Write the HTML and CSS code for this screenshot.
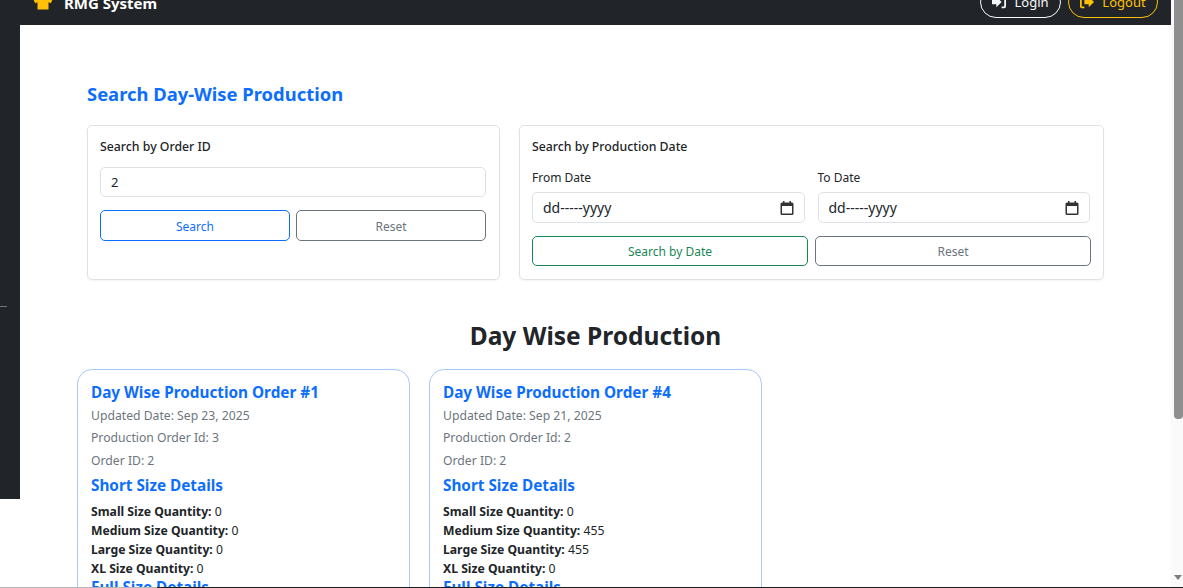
FILE: index.html
```html
<!DOCTYPE html>
<html lang="en">
<head>
  <meta charset="UTF-8" />
  <meta name="viewport" content="width=device-width, initial-scale=1.0" />
  <title>RMG System</title>
  <link rel="stylesheet" href="styles.css">
</head>
<body>
  <div class="window">
    <div class="page">
      <nav class="navbar">
        <div class="brand">
          <svg class="brand-icon" width="22" height="24" viewBox="0 0 24 24"><path fill="#ffc107" d="M7 1l3 1.500h4L17 1l6 4-2.500 5-2.500-1v8H6V9l-2.500 1L1 5z"/></svg>
          <span>RMG System</span>
        </div>
        <div class="nav-actions">
          <a class="nav-btn nav-login">
            <svg width="14" height="14" viewBox="0 0 16 16"><path fill="currentColor" d="M0 5.500h5V2l6 6-6 6v-3.500H0zM11 1h3a2 2 0 0 1 2 2v10a2 2 0 0 1-2 2h-3v-2h3V3h-3z"/></svg>
            Login
          </a>
          <a class="nav-btn nav-logout">
            <svg width="14" height="14" viewBox="0 0 16 16"><path fill="currentColor" d="M5 1H2a2 2 0 0 0-2 2v10a2 2 0 0 0 2 2h3v-2H2V3h3zM5 5.500h5V2l6 6-6 6v-3.500H5z"/></svg>
            Logout
          </a>
        </div>
      </nav>

      <div class="layout">
        <aside class="sidebar"><span class="sidebar-mark"></span></aside>
        <main class="content">
          <!-- Search forms -->
          <section class="search-section">
            <h2 class="search-title">Search Day-Wise Production</h2>
            <div class="search-row">
              <form class="search-card search-card-order">
                <label class="card-label">Search by Order ID</label>
                <input class="field" type="text" value="2" />
                <div class="btn-row">
                  <button type="button" class="btn btn-blue">Search</button>
                  <button type="button" class="btn btn-gray">Reset</button>
                </div>
              </form>
              <form class="search-card search-card-date">
                <label class="card-label">Search by Production Date</label>
                <div class="date-row">
                  <div class="date-col">
                    <label class="date-label">From Date</label>
                    <div class="field date-field">
                      <span>dd-----yyyy</span>
                      <svg width="14" height="14" viewBox="0 0 14 14"><path fill="#333" d="M3 0h1.500v1.500h5V0H11v1.500h1A1.500 1.500 0 0 1 13.500 3v9.500A1.500 1.500 0 0 1 12 14H2A1.500 1.500 0 0 1 .5 12.500V3A1.500 1.500 0 0 1 2 1.500h1zM2 5v7.500h10V5z"/></svg>
                    </div>
                  </div>
                  <div class="date-col">
                    <label class="date-label">To Date</label>
                    <div class="field date-field">
                      <span>dd-----yyyy</span>
                      <svg width="14" height="14" viewBox="0 0 14 14"><path fill="#333" d="M3 0h1.500v1.500h5V0H11v1.500h1A1.500 1.500 0 0 1 13.500 3v9.500A1.500 1.500 0 0 1 12 14H2A1.500 1.500 0 0 1 .5 12.500V3A1.500 1.500 0 0 1 2 1.500h1zM2 5v7.500h10V5z"/></svg>
                    </div>
                  </div>
                </div>
                <div class="btn-row btn-row-date">
                  <button type="button" class="btn btn-green">Search by Date</button>
                  <button type="button" class="btn btn-gray">Reset</button>
                </div>
              </form>
            </div>
          </section>

          <h1 class="list-title">Day Wise Production</h1>

          <div class="order-grid">
            <article class="order-card">
              <h5 class="order-title">Day Wise Production Order #1</h5>
              <p class="meta">Updated Date: Sep 23, 2025</p>
              <p class="meta">Production Order Id: 3</p>
              <p class="meta">Order ID: 2</p>
              <h6 class="size-title">Short Size Details</h6>
              <ul class="qty-list">
                <li><b>Small Size Quantity:</b> 0</li>
                <li><b>Medium Size Quantity:</b> 0</li>
                <li><b>Large Size Quantity:</b> 0</li>
                <li><b>XL Size Quantity:</b> 0</li>
              </ul>
              <h6 class="size-title size-title-full">Full Size Details</h6>
            </article>
            <article class="order-card">
              <h5 class="order-title">Day Wise Production Order #4</h5>
              <p class="meta">Updated Date: Sep 21, 2025</p>
              <p class="meta">Production Order Id: 2</p>
              <p class="meta">Order ID: 2</p>
              <h6 class="size-title">Short Size Details</h6>
              <ul class="qty-list">
                <li><b>Small Size Quantity:</b> 0</li>
                <li><b>Medium Size Quantity:</b> 455</li>
                <li><b>Large Size Quantity:</b> 455</li>
                <li><b>XL Size Quantity:</b> 0</li>
              </ul>
              <h6 class="size-title size-title-full">Full Size Details</h6>
            </article>
          </div>
        </main>
      </div>
    </div>

    <div class="scrollbar">
      <span class="scroll-thumb"></span>
      <span class="scroll-down"></span>
    </div>
  </div>
  <div class="window-edge">
    <span class="edge-light"></span>
    <span class="edge-dark"></span>
  </div>
</body>
</html>
```

FILE: styles.css
```css
* {
  box-sizing: border-box;
}
html, body {
  margin: 0;
  padding: 0;
  height: 100%;
  overflow: hidden;
}
body {
  font-family: "Noto Sans", "Open Sans", sans-serif;
  font-size: 12.2px;
  color: #212529;
  background: #fff;
}
.window {
  display: flex;
  height: 587px;
}
.page {
  flex: 1;
  min-width: 0;
  display: flex;
  flex-direction: column;
  overflow: hidden;
}
.window-edge {
  display: flex;
  height: 1px;
}
.edge-light {
  width: 157px;
  background: #b5b5b5;
}
.edge-dark {
  flex: 1;
  background: #1a1a1a;
}

/* Top bar, scrolled so its top part is cut off */
.navbar {
  height: 25px;
  flex-shrink: 0;
  background: #212529;
  display: flex;
  justify-content: space-between;
  align-items: flex-end;
  padding: 0 13px 7px 32px;
  overflow: hidden;
}
.brand {
  display: flex;
  align-items: center;
  gap: 10px;
  color: #fff;
  font-weight: bold;
  font-size: 15px;
  height: 24px;
  margin-bottom: 3px;
  flex-shrink: 0;
}
.brand-icon {
  flex-shrink: 0;
  margin-top: 4px;
}
.nav-actions {
  display: flex;
  gap: 7px;
  flex-shrink: 0;
}
.nav-btn {
  display: flex;
  align-items: center;
  justify-content: center;
  gap: 8px;
  height: 32px;
  border: 1px solid;
  border-radius: 16px;
  font-size: 13px;
}
.nav-login {
  width: 81px;
  color: #f8f9fa;
  border-color: #f8f9fa;
}
.nav-logout {
  width: 90px;
  color: #ffc107;
  border-color: #ffc107;
}

.layout {
  flex: 1;
  display: flex;
  min-height: 0;
}
.sidebar {
  width: 20px;
  height: 474px;
  flex-shrink: 0;
  background: #212529;
  padding-top: 281px;
}
.sidebar-mark {
  display: block;
  width: 7px;
  height: 1px;
  background: #6c757d;
}
.content {
  flex: 1;
  min-width: 0;
  padding: 0 57px;
  overflow: hidden;
}

.search-section {
  padding: 57px 10px 0;
}
.search-title {
  margin: 0 0 19px;
  font-size: 18.4px;
  line-height: 24px;
  color: #0d6efd;
}
.search-row {
  display: flex;
  gap: 19px;
}
.search-card {
  height: 155px;
  border: 1px solid #dee2e6;
  border-radius: 5px;
  padding: 12px;
  box-shadow: 0 1px 2px rgba(0, 0, 0, 0.05);
}
.search-card-order {
  width: 413px;
  padding-right: 13px;
}
.search-card-date {
  width: 585px;
}
.card-label {
  display: block;
  font-size: 12.3px;
  font-weight: 500;
  line-height: 18px;
  margin-bottom: 11px;
}
.field {
  display: block;
  width: 100%;
  height: 30px;
  border: 1px solid #dee2e6;
  border-radius: 5px;
  padding: 0 10px;
  font: inherit;
  font-size: 13px;
  color: #212529;
  background: #fff;
}
.btn-row {
  display: grid;
  grid-template-columns: 1fr 1fr;
  gap: 6px;
  margin-top: 13px;
}
.btn {
  height: 31px;
  padding: 1px 0 0;
  background: #fff;
  border: 1px solid;
  border-radius: 5px;
  font: inherit;
  font-size: 12px;
}
.btn-blue {
  color: #0d6efd;
  border-color: #0d6efd;
}
.btn-gray {
  color: #6c757d;
  border-color: #6c757d;
}
.btn-green {
  color: #198754;
  border-color: #198754;
}
.btn-row-date {
  gap: 7px;
}
.btn-row-date .btn {
  height: 30px;
}
.date-row {
  display: grid;
  grid-template-columns: 1fr 1fr;
  gap: 13px;
  margin: 13px 1px 0 0;
}
.date-label {
  display: block;
  font-size: 12px;
  line-height: 18px;
  margin-bottom: 5px;
}
.date-field {
  display: flex;
  align-items: center;
  justify-content: space-between;
  height: 31px;
  font-size: 14px;
  padding-right: 10px;
}

.list-title {
  margin: 40px 0 17px;
  text-align: center;
  font-size: 24.5px;
  line-height: 32px;
}
.order-grid {
  display: flex;
  gap: 19px;
}
.order-card {
  width: 333px;
  height: 300px;
  border: 1px solid #a6c8fb;
  border-radius: 15px;
  padding: 11px 13px;
  flex-shrink: 0;
}
.order-title {
  margin: 0 0 1.7px;
  font-size: 15.3px;
  line-height: 22px;
  font-weight: bold;
  color: #0d6efd;
}
.meta {
  margin: 0;
  line-height: 22.5px;
  color: #6c757d;
}
.size-title {
  margin: 1.8px 0 6px;
  font-size: 15.3px;
  line-height: 22px;
  font-weight: bold;
  color: #0d6efd;
}
.size-title-full {
  margin-top: -2px;
}
.qty-list {
  list-style: none;
  margin: 0;
  padding: 0;
  line-height: 19px;
}

/* Fake browser scrollbar */
.scrollbar {
  width: 12px;
  flex-shrink: 0;
  background: #fafafa;
  position: relative;
}
.scroll-thumb {
  position: absolute;
  top: 0;
  left: 3px;
  width: 9px;
  height: 419px;
  background: #8f8f8f;
  border-radius: 0 0 4px 4px;
}
.scroll-down {
  position: absolute;
  left: 3px;
  bottom: 7px;
  width: 0;
  height: 0;
  border-left: 4.5px solid transparent;
  border-right: 4.5px solid transparent;
  border-top: 5px solid #7d7d7d;
}
```
